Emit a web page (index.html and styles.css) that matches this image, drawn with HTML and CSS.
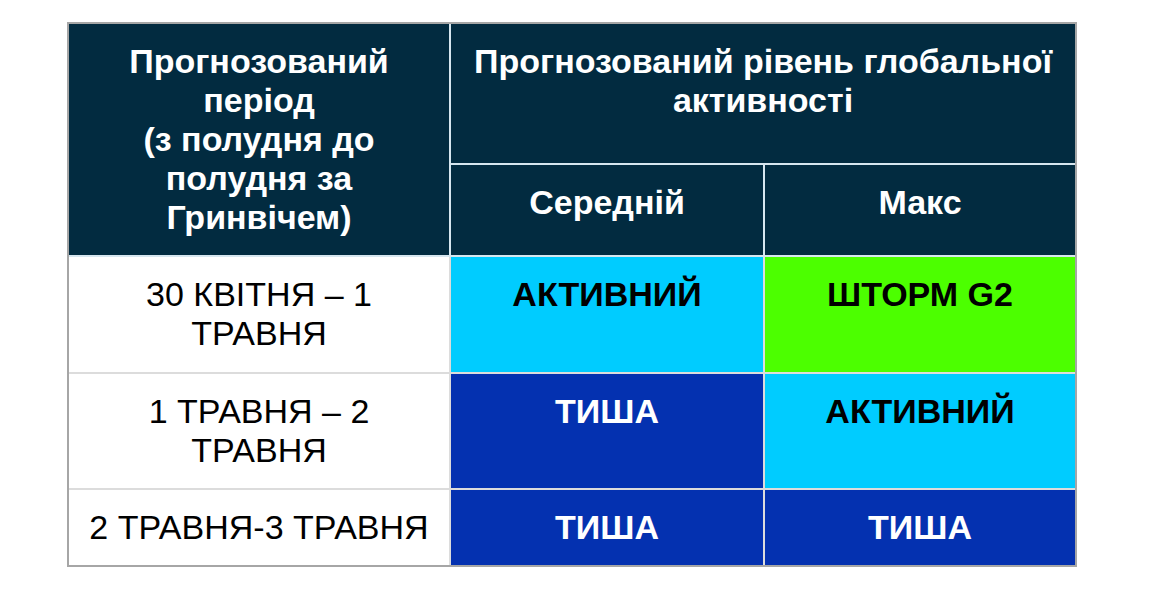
FILE: index.html
```html
<!DOCTYPE html>
<html lang="uk">
<head>
<meta charset="utf-8">
<title>Прогноз геомагнітної активності</title>
<link rel="stylesheet" href="styles.css">
</head>
<body>
<table class="forecast">
  <colgroup>
    <col class="c-period">
    <col class="c-mid">
    <col class="c-max">
  </colgroup>
  <thead>
    <tr class="h1">
      <th rowspan="2" class="cell head">Прогнозований<br>період<br>(з полудня до<br>полудня за<br>Гринвічем)</th>
      <th colspan="2" class="cell head last">Прогнозований рівень глобальної<br>активності</th>
    </tr>
    <tr class="h2">
      <th class="cell head">Середній</th>
      <th class="cell head last">Макс</th>
    </tr>
  </thead>
  <tbody>
    <tr class="r1">
      <td class="cell date">30 КВІТНЯ – 1<br>ТРАВНЯ</td>
      <td class="cell lvl active">АКТИВНИЙ</td>
      <td class="cell lvl storm last">ШТОРМ G2</td>
    </tr>
    <tr class="r2">
      <td class="cell date">1 ТРАВНЯ – 2<br>ТРАВНЯ</td>
      <td class="cell lvl quiet">ТИША</td>
      <td class="cell lvl active last">АКТИВНИЙ</td>
    </tr>
    <tr class="r3">
      <td class="cell date bottom">2 ТРАВНЯ-3 ТРАВНЯ</td>
      <td class="cell lvl quiet bottom">ТИША</td>
      <td class="cell lvl quiet last bottom">ТИША</td>
    </tr>
  </tbody>
</table>
</body>
</html>
```

FILE: styles.css
```css
html, body {
  margin: 0;
  padding: 0;
  background: #ffffff;
}

body {
  padding: 22px 0 0 67px;
  font-family: "Liberation Sans", Arial, sans-serif;
}

.forecast {
  border-collapse: separate;
  border-spacing: 0;
  border: 2px solid #a6a6a6;
  table-layout: fixed;
  width: 1010px;
  font-size: 34px;
  line-height: 39px;
}

.c-period { width: 382px; }
.c-mid { width: 314px; }
.c-max { width: 310px; }

.cell {
  padding: 18px 4px 0;
  text-align: center;
  vertical-align: top;
  border-right: 2px solid #dcdcdc;
  border-bottom: 2px solid #dcdcdc;
}

.cell.last { border-right: none; }
.cell.bottom { border-bottom: none; }

.head {
  background: #022b40;
  color: #ffffff;
  font-weight: bold;
  border-color: #d6e6ef;
}

.h1 { height: 141px; }
.h2 { height: 92px; }
.r1 { height: 117px; }
.r2 { height: 116px; }
.r3 { height: 75px; }

.date {
  color: #000000;
  font-weight: normal;
  background: #ffffff;
}

.lvl { font-weight: bold; }

.active {
  background: #00ccff;
  color: #000000;
}

.storm {
  background: #4cff00;
  color: #000000;
}

.quiet {
  background: #0431b0;
  color: #ffffff;
}
```
